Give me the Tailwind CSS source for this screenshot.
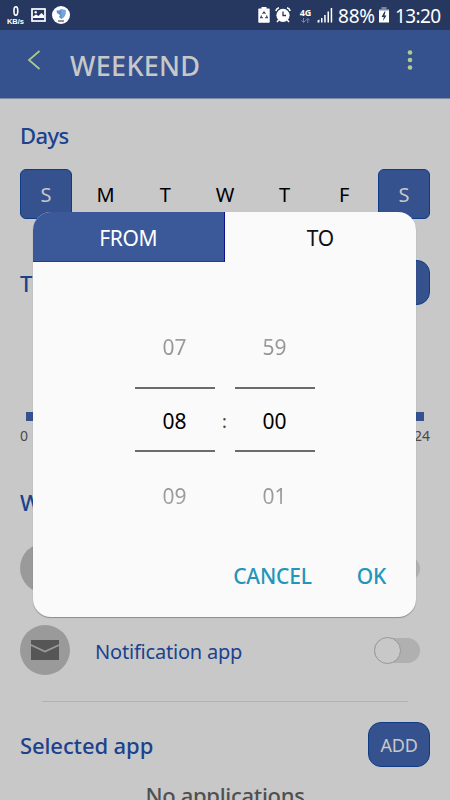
<!DOCTYPE html>
<html lang="en">
<head>
    <meta charset="UTF-8"/>
    <meta name="viewport" content="width=device-width, initial-scale=1.0"/>
    <title>Weekend</title>
    <script src="https://cdn.jsdelivr.net/npm/@tailwindcss/browser@4"></script>
</head>
<body class="bg-[#c8c8c8] font-['Noto_Sans',sans-serif] overflow-hidden">
<div class="relative w-[450px] h-[800px] overflow-hidden">

    <!-- Status bar -->
    <div class="h-[30px] bg-[#263860] text-white flex items-center justify-between pl-[6px] pr-[9px]">
        <div class="flex items-center">
            <div class="w-[19px] flex flex-col items-center font-['Liberation_Sans',sans-serif] font-bold">
                <span class="text-[14px] leading-[13px] scale-x-80">0</span>
                <span class="text-[7.5px] leading-[7px]">KB/s</span>
            </div>
            <svg class="ml-[6px]" width="15" height="14" viewBox="0 0 15 14">
                <rect x="1" y="1" width="13" height="12" fill="none" stroke="#fff" stroke-width="1.7"/>
                <path d="M2 10V8.500L5 6.500L7.500 8L10.500 5L13 7.500V10Z" fill="#fff"/>
                <circle cx="4.700" cy="4.200" r="1.200" fill="#fff"/>
            </svg>
            <svg class="ml-[6px]" width="18" height="18" viewBox="0 0 18 18">
                <circle cx="9" cy="9" r="9" fill="#fff"/>
                <path d="M4.500 4.500Q8 5 9 3Q11 4 13.500 4V8Q13 11 9.500 13L7 11L8 9L5 7Z" fill="#5b8fd0"/>
                <path d="M9 3Q11 4 13.500 4V8Q12 11 9.500 12.500Z" fill="#7ba5da"/>
                <path d="M6 15h6" stroke="#555" stroke-width="1.300"/>
            </svg>
        </div>
        <div class="flex items-center">
            <svg width="12" height="16" viewBox="0 0 12 16">
                <path d="M3.500 0h5v1.500H11a.7.700 0 0 1 .7.700V15a.7.700 0 0 1-.7.700H1a.7.700 0 0 1-.7-.7V2.200a.7.700 0 0 1 .7-.7h2.500z" fill="#fff"/>
                <path d="M4.600 7L6 5L7.400 7M8.500 8.500L9.300 10.800H7M5 10.800H2.700L3.500 8.500" fill="none" stroke="#263860" stroke-width="1.100"/>
            </svg>
            <svg class="ml-[5px]" width="16" height="16" viewBox="0 0 16 16">
                <circle cx="8" cy="8.300" r="6.600" fill="#fff"/>
                <path d="M.8 4Q1.500 1.500 4 .8M12 .8Q14.500 1.500 15.200 4M3.700 13L2 15M12.300 13L14 15" stroke="#fff" stroke-width="1.500" fill="none"/>
                <path d="M8 4.500V8.500H11" stroke="#263860" stroke-width="1.300" fill="none"/>
            </svg>
            <div class="ml-[8px] w-[13px] flex flex-col items-center">
                <span class="text-[9px] leading-[9px] font-bold">4G</span>
                <svg class="mt-px" width="9" height="5" viewBox="0 0 9 5">
                    <path d="M2.500 0V4M.5 2.500L2.500 4.500L4.500 2.500M6.800 5V1M4.800 2.500L6.800.5L8.800 2.500" stroke="#7a86a3" fill="none"/>
                </svg>
            </div>
            <svg class="ml-[5px]" width="16" height="16" viewBox="0 0 16 16" fill="#fff">
                <path d="M.5 13.500L2.500 12.500V15.500H.5zM4 11h1.500v4.500H4zM7.200 8h1.500v7.500H7.200zM10.500 4.500H12v11h-1.500zM13.700 1h1.500v14.500h-1.500z"/>
            </svg>
            <span class="mt-[2px] ml-[5px] w-[38px] text-[19px] leading-[28px] tracking-[-0.2px] whitespace-nowrap">88%</span>
            <svg class="ml-[3px]" width="10" height="16" viewBox="0 0 10 16">
                <path d="M2.500 0h5v2H10v2.500H0V2h2.500z" fill="#7a86a3"/>
                <path d="M0 3.500h10v12H0z" fill="#fff"/>
                <path d="M5.500 4.500L2.500 10h2.300L4 14L7.500 8.500H5.500L6.500 4.500z" fill="#263860"/>
            </svg>
            <span class="mt-[2px] ml-[6px] w-[46px] text-[19px] leading-[28px] tracking-[-0.6px] whitespace-nowrap">13:20</span>
        </div>
    </div>

    <!-- App bar -->
    <header class="h-[69px] bg-[#35528e] border-b border-[#7f8ba6] flex items-center pl-[27px] pr-[36px]">
        <svg class="mb-[8px]" width="14" height="20" viewBox="0 0 14 20">
            <path d="M12.500 1L2 10L12.500 19" fill="none" stroke="#a9c98b" stroke-width="1.800"/>
        </svg>
        <h1 class="mt-[4px] ml-[29px] text-[27px] leading-[36px] tracking-[0.3px] font-medium text-[#c8c8c8]">WEEKEND</h1>
        <svg class="ml-auto mb-[8px]" width="8" height="22" viewBox="0 0 8 22" fill="#b0cb8d">
            <circle cx="4" cy="3.500" r="2.300"/>
            <circle cx="4" cy="11" r="2.300"/>
            <circle cx="4" cy="18.500" r="2.300"/>
        </svg>
    </header>

    <main class="px-5 text-[#1a428d]">
        <!-- Days -->
        <h2 class="pt-[21px] h-[70px] text-[22px] leading-[30px] tracking-[-0.6px] font-medium">Days</h2>
        <div class="flex justify-between text-[20px] text-black">
            <div class="w-[52px] h-[50px] rounded-md bg-[#35528e] border border-[#0f3b87] text-[#c8c8c8] pt-[2px] flex items-center justify-center">S</div>
            <div class="w-[52px] h-[50px] pt-[2px] flex items-center justify-center">M</div>
            <div class="w-[52px] h-[50px] pt-[2px] flex items-center justify-center">T</div>
            <div class="w-[52px] h-[50px] pt-[2px] flex items-center justify-center">W</div>
            <div class="w-[52px] h-[50px] pt-[2px] flex items-center justify-center">T</div>
            <div class="w-[52px] h-[50px] pt-[2px] flex items-center justify-center">F</div>
            <div class="w-[52px] h-[50px] rounded-md bg-[#35528e] border border-[#0f3b87] text-[#c8c8c8] pt-[2px] flex items-center justify-center">S</div>
        </div>

        <!-- Time -->
        <div class="mt-[41px] h-[45px] flex items-center justify-between">
            <h2 class="text-[22px] leading-[30px] font-medium">Time</h2>
            <div class="w-[62px] h-[45px] rounded-[13px] bg-[#35528e] border border-[#0f3b87]"></div>
        </div>
        <div class="mt-[107px] mx-[6px] h-[9px] bg-[#35528e]"></div>
        <div class="mt-[5px] flex justify-between text-[14px] leading-[20px] text-[#4a4a4a]">
            <span>0</span>
            <span>24</span>
        </div>

        <!-- Apps -->
        <h2 class="mt-[41px] text-[22px] leading-[30px] font-medium">When</h2>
        <div class="mt-[26px] h-[50px] pr-[10px] flex items-center justify-between">
            <div class="size-[50px] rounded-full bg-[#9a9a9a]"></div>
            <div class="w-[46px] h-[25px] rounded-full bg-[#b0b0b0]"></div>
        </div>
        <div class="mt-[32px] h-[50px] pr-[10px] flex items-center">
            <div class="size-[50px] rounded-full bg-[#9a9a9a] flex items-center justify-center">
                <svg width="28" height="20" viewBox="0 0 28 20">
                    <path d="M0 0h28v20H0z" fill="#565656"/>
                    <path d="M0 5L14 11.500L28 5" fill="none" stroke="#9a9a9a" stroke-width="1.600"/>
                </svg>
            </div>
            <span class="mt-[3px] ml-[25px] text-[20px] tracking-[-0.2px]">Notification app</span>
            <div class="ml-auto w-[46px] h-[25px] rounded-full bg-[#b0b0b0] flex items-center">
                <div class="size-[27px] shrink-0 rounded-full bg-[#c8c8c8] border border-[#979797]"></div>
            </div>
        </div>
        <div class="mt-[26px] ml-[22px] mr-[22px] h-px bg-[#b2b2b2]"></div>
        <div class="mt-[20px] h-[45px] flex items-center justify-between">
            <h2 class="text-[22px] leading-[30px] tracking-[-0.1px] font-medium">Selected app</h2>
            <div class="w-[62px] h-[45px] rounded-[13px] bg-[#35528e] border border-[#0f3b87] text-[#c8c8c8] text-[18px] pt-[2px] tracking-[-0.2px] flex items-center justify-center">ADD</div>
        </div>
        <p class="mt-[13px] text-center text-[22px] leading-[30px] tracking-[-0.3px] font-medium text-[#505050]">No applications</p>
    </main>

    <!-- Time picker dialog -->
    <div class="absolute left-[33px] top-[212px] w-[383px] h-[405px] rounded-[18px] bg-[#fafafa] overflow-hidden shadow-[0_1px_1px_rgba(0,0,0,0.3)]">
        <div class="h-[50px] grid grid-cols-2 text-[21px] tracking-[-0.4px]">
            <div class="bg-[#3b5998] border-r border-r-[#10108c] border-b border-b-[#1f3f88] text-white pt-[4px] flex items-center justify-center">FROM</div>
            <div class="text-[#111] pt-[4px] flex items-center justify-center">TO</div>
        </div>
        <div class="mt-[65px] flex justify-center text-[21px] text-black">
            <div class="w-[80px] flex flex-col text-center leading-[40px]">
                <span class="bg-linear-to-b from-[#a6a6a6] to-[#888888] bg-clip-text text-transparent">07</span>
                <span class="mt-[20px] h-[65px] border-y-2 border-[#6b6b6b] leading-[65px]">08</span>
                <span class="mt-[24px] bg-linear-to-b from-[#888888] to-[#b0b0b0] bg-clip-text text-transparent">09</span>
            </div>
            <span class="w-[20px] mt-[62px] leading-[65px] text-center text-[18px] text-[#444]">:</span>
            <div class="w-[80px] flex flex-col text-center leading-[40px]">
                <span class="bg-linear-to-b from-[#a6a6a6] to-[#888888] bg-clip-text text-transparent">59</span>
                <span class="mt-[20px] h-[65px] border-y-2 border-[#6b6b6b] leading-[65px]">00</span>
                <span class="mt-[24px] bg-linear-to-b from-[#888888] to-[#b0b0b0] bg-clip-text text-transparent">01</span>
            </div>
        </div>
        <div class="mt-[45px] pr-[30px] flex justify-end gap-[45px] text-[21px] leading-[30px] tracking-[-0.2px] font-medium text-[#2196ba]">
            <button>CANCEL</button>
            <button>OK</button>
        </div>
    </div>

</div>
</body>
</html>
